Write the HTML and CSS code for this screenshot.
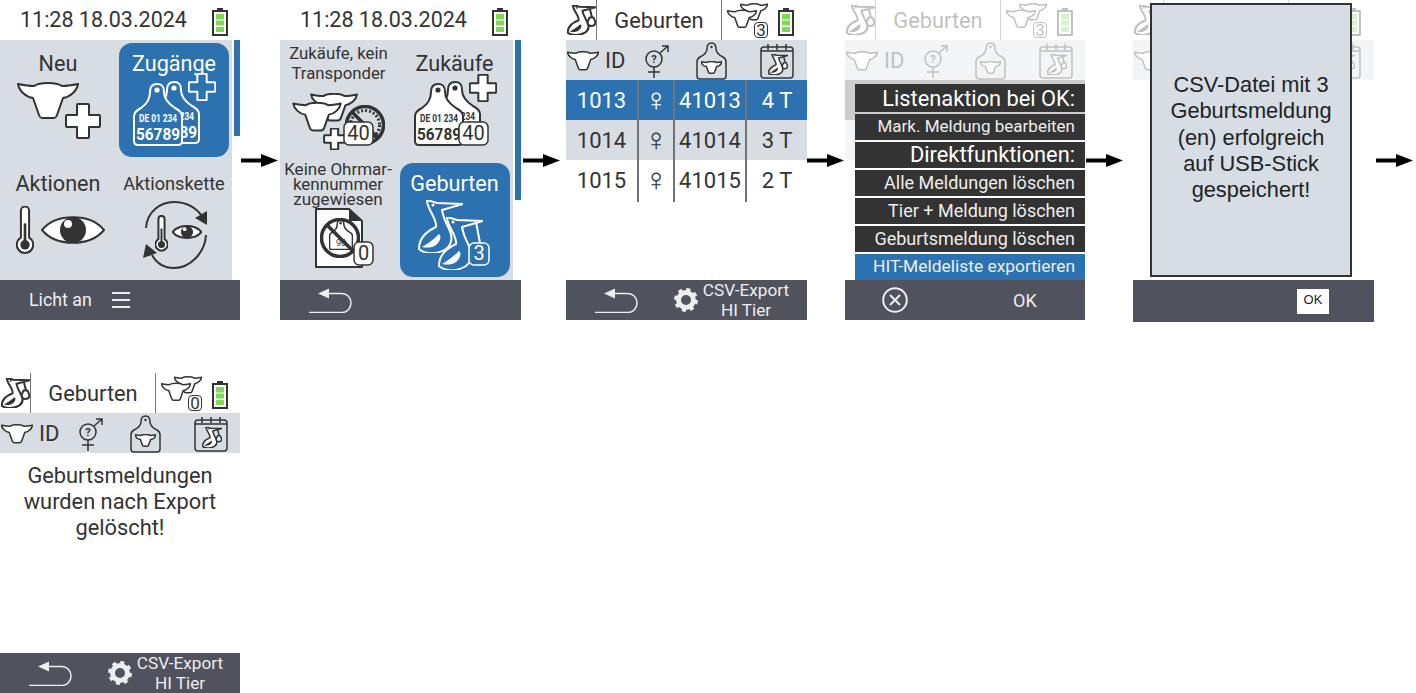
FILE: index.html
```html
<!DOCTYPE html>
<html lang="de">
<head>
<meta charset="utf-8">
<title>Geburten HIT-Export</title>
<link rel="stylesheet" href="styles.css">
</head>
<body>
<svg class="defs" aria-hidden="true">
  <symbol id="cow" viewBox="0 0 62 38">
    <path class="ln" d="M1 2C6 3 12 4 17 4C20 2 24 1 31 1C38 1 42 2 45 4C50 4 56 3 61 2C60 9 53 15 46 16L40 33C39 36 38 36 36 36H26C24 36 23 36 22 33L16 16C9 15 2 9 1 2Z"/>
  </symbol>
  <symbol id="plus" viewBox="0 0 36 36">
    <path class="ln" d="M12 2Q12 1 13 1H23Q24 1 24 2V12H34Q35 12 35 13V23Q35 24 34 24H24V34Q24 35 23 35H13Q12 35 12 34V24H2Q1 24 1 23V13Q1 12 2 12H12Z"/>
  </symbol>
  <symbol id="tagshape" viewBox="0 0 50 63">
    <path class="ln" d="M17 9C17 3 20 1 24 1C29 1 31 3 31 9C31 16 36 21 42 25C46 27 49 29 49 33V58Q49 62 45 62H5Q1 62 1 58V33C1 29 4 27 8 25C14 21 17 16 17 9Z"/>
    <circle class="ink" cx="24" cy="7" r="2.600"/>
  </symbol>
  <symbol id="eartag" viewBox="0 0 50 63">
    <use href="#tagshape" width="50" height="63"/>
    <text class="tag-small" x="25" y="39" text-anchor="middle" textLength="38" lengthAdjust="spacingAndGlyphs">DE 01 234</text>
    <text class="tag-big" x="25" y="57" text-anchor="middle" textLength="44" lengthAdjust="spacingAndGlyphs">56789</text>
  </symbol>
  <symbol id="stork" viewBox="0 0 45 53">
    <path class="ln" d="M9 0C13 1 16 2 19 3L45 4L24 10C25 17 28 23 31 29C35 37 34 44 28 49C20 54 8 55 1 49C1 40 7 32 18 27C19 22 14 14 12 10C10 6 9 3 9 0Z"/>
    <path class="ink" d="M4 47C9 44 15 40 21 34C24 36 22 42 18 45C14 48 9 48 4 47Z"/>
    <circle class="ink" cx="15" cy="5" r="1.500"/>
  </symbol>
  <symbol id="stork-b" viewBox="0 0 45 53" preserveAspectRatio="none">
    <path class="ln-open" d="M35 5L39 23"/>
    <use href="#stork" width="45" height="53"/>
    <path class="ln" d="M35 22H41L44 30C44 35 41 37 38 37C35 37 32 35 32 30Z"/>
  </symbol>
  <symbol id="therm" viewBox="0 0 17 47">
    <path class="ln" d="M4.500 4.500a4 4 0 0 1 8 0V31a8 8 0 1 1-8 0Z"/>
    <rect class="ink" x="7.200" y="17" width="2.600" height="20"/>
    <circle class="ink" cx="8.500" cy="38" r="4.600"/>
  </symbol>
  <symbol id="eye" viewBox="0 0 64 34">
    <path class="ln" d="M1 17C15 0 49 0 63 17C49 34 15 34 1 17Z"/>
    <circle class="ink" cx="32" cy="17" r="13"/>
    <circle class="hi" cx="27" cy="11" r="4"/>
  </symbol>
  <symbol id="gender" viewBox="0 0 24 33">
    <circle class="ln-open" cx="9" cy="14" r="8"/>
    <path class="ln-open" d="M15 8L23 1M17 1H23V7M9 22V33M3 27H15"/>
    <text class="q" x="9" y="18" text-anchor="middle">?</text>
  </symbol>
  <symbol id="cowtag" viewBox="0 0 31 38">
    <path class="ln-open" d="M11 7C11 3 13 1 15.500 1C18 1 20 3 20 7C20 10 23 13 27 15C29 16 30 18 30 20V34Q30 37 27 37H4Q1 37 1 34V20C1 18 2 16 4 15C8 13 11 10 11 7Z"/>
    <circle class="ink" cx="15.500" cy="5" r="1.200"/>
    <use href="#cow" x="5" y="19" width="21" height="13"/>
  </symbol>
  <symbol id="calendar" viewBox="0 0 34 36">
    <rect class="ln-open" x="1" y="4" width="32" height="31" rx="3"/>
    <path class="ln-open" d="M1 8H33M8 1V7M17 1V7M26 1V7"/>
    <use href="#stork-b" x="8" y="11" width="20" height="21"/>
  </symbol>
  <symbol id="nosign" viewBox="0 0 40 40">
    <circle class="ln-open" cx="20" cy="20" r="18.500"/>
    <path class="ln-open" d="M7 7L33 33"/>
  </symbol>
  <symbol id="battery" viewBox="0 0 16 28">
    <rect class="ink" x="5" y="0" width="6" height="2"/>
    <rect class="bat" x="1" y="3" width="14" height="24"/>
    <rect class="cell" x="4" y="6" width="8" height="5.500"/>
    <rect class="cell" x="4" y="12.500" width="8" height="5"/>
    <rect class="cell" x="4" y="19" width="8" height="5"/>
  </symbol>
  <symbol id="back" viewBox="0 -2 43 25">
    <polygon class="ink" points="9,3.500 20,-1.500 20,8.500"/>
    <path class="ln-open" d="M19 3.500H33a9 9.500 0 0 1 0 19H0"/>
  </symbol>
  <symbol id="gear" viewBox="0 0 24 24">
    <circle class="gear-ring" cx="12" cy="12" r="7.500"/>
    <circle class="gear-teeth" cx="12" cy="12" r="10"/>
  </symbol>
  <symbol id="cows" viewBox="0 0 41 35">
    <use href="#cow" x="13" y="0" width="28" height="18"/>
    <use href="#cow" x="0" y="6" width="30" height="20"/>
  </symbol>
</svg>

<div class="row">
  <section class="screen">
    <header class="clockbar"><span class="clock">11:28 18.03.2024</span><svg class="battery"><use href="#battery"/></svg></header>
    <div class="menu-body">
      <div class="tiles">
        <div class="tile"><div class="lbl lbl-lg">Neu</div>
          <svg class="art" viewBox="0 80 116 80"><use href="#cow" x="17" y="82" width="62" height="38"/><use href="#plus" x="65" y="103" width="36" height="36"/></svg></div>
        <div class="tile sel"><div class="lbl lbl-lg">Zugänge</div>
          <svg class="art" viewBox="116 80 116 80"><use href="#eartag" x="150" y="81" width="50" height="63"/><use href="#eartag" x="133" y="83" width="50" height="63"/><use href="#plus" x="188" y="73" width="28" height="28"/></svg></div>
        <div class="tile"><div class="lbl lbl-lg">Aktionen</div>
          <svg class="art" viewBox="0 200 116 80"><use href="#therm" x="16" y="206" width="18" height="48"/><use href="#eye" x="41" y="213" width="64" height="34"/></svg></div>
        <div class="tile"><div class="lbl lbl-md">Aktionskette</div>
          <svg class="art" viewBox="116 200 116 80">
            <path class="ln-open" d="M146 228C147 212 160 202 174 202C186 202 196 208 202 216"/>
            <path class="ln-open" d="M206 235C205 253 190 268 174 268C165 268 157 264 152 255"/>
            <polygon class="ink" points="207,211 207,225 195,218"/><polygon class="ink" points="146,244 143,258 157,253"/>
            <use href="#therm" x="155" y="215" width="13" height="37"/><use href="#eye" x="172" y="222" width="30" height="20"/>
          </svg></div>
      </div>
      <div class="scroll scroll-a"></div>
    </div>
    <footer class="foot"><span class="licht">Licht an</span><svg class="burger" viewBox="0 0 18 16"><path class="ln-open" d="M0 1H18M0 8H18M0 15H18"/></svg></footer>
  </section>
  <div class="arrow-cell arr1"><svg class="arrow"><path d="M0 4.500H20V0L37 6.500L20 13V8.500H0Z"/></svg></div>

  <section class="screen wide">
    <header class="clockbar"><span class="clock">11:28 18.03.2024</span><svg class="battery"><use href="#battery"/></svg></header>
    <div class="menu-body">
      <div class="tiles">
        <div class="tile"><div class="lbl lbl-two">Zukäufe, kein<br>Transponder</div>
          <svg class="art" viewBox="280 80 116 80">
            <use href="#cow" x="310" y="93" width="48" height="29"/><use href="#cow" x="292" y="102" width="50" height="30"/>
            <circle class="tread" cx="365" cy="125" r="14.500"/><use href="#nosign" class="thick" x="345" y="105" width="40" height="40"/><use href="#plus" x="323" y="128" width="23" height="22"/>
            <rect class="badge" x="344" y="122" width="29" height="23" rx="5"/><text class="badge-t" x="358.500" y="140" text-anchor="middle">40</text>
          </svg></div>
        <div class="tile"><div class="lbl lbl-lg">Zukäufe</div>
          <svg class="art" viewBox="396 80 116 80">
            <use href="#eartag" x="431" y="81" width="50" height="63"/><use href="#eartag" x="414" y="83" width="50" height="63"/><use href="#plus" x="469" y="74" width="28" height="28"/>
            <rect class="badge" x="459" y="122" width="29" height="23" rx="5"/><text class="badge-t" x="473.500" y="140" text-anchor="middle">40</text>
          </svg></div>
        <div class="tile"><div class="lbl lbl-three">Keine Ohrmar-<br>kennummer<br>zugewiesen</div>
          <svg class="art" viewBox="280 200 116 80">
            <path class="ln" d="M316 209H349L362 221V267H316Z"/><path class="ink" d="M349 209L362 221H349Z"/>
            <use href="#tagshape" class="thin" x="329" y="220" width="24" height="30"/><text class="tag-mini" x="341" y="246" text-anchor="middle">90</text><use href="#nosign" class="thick" x="320" y="218" width="40" height="40"/>
            <rect class="badge" x="354" y="242" width="19" height="23" rx="5"/><text class="badge-t" x="363.500" y="260" text-anchor="middle">0</text>
          </svg></div>
        <div class="tile sel"><div class="lbl lbl-lg">Geburten</div>
          <svg class="art" viewBox="396 200 116 80">
            <use href="#stork" x="418" y="200" width="45" height="53"/>
            <use href="#stork" x="438" y="217" width="45" height="53"/><path class="ln-open" d="M476 222L480 243"/>
            <rect class="badge" x="469" y="243" width="20" height="22" rx="5"/><text class="badge-t" x="479" y="260" text-anchor="middle">3</text>
          </svg></div>
      </div>
      <div class="scroll scroll-b"></div>
    </div>
    <footer class="foot"><svg class="back"><use href="#back"/></svg></footer>
  </section>
  <div class="arrow-cell arr2"><svg class="arrow"><path d="M0 4.500H20V0L37 6.500L20 13V8.500H0Z"/></svg></div>

  <section class="screen wide">
    <header class="titlebar"><div class="tb-stork"><svg class="hd-stork"><use href="#stork-b"/></svg></div><div class="tb-title">Geburten</div><div class="tb-status"><div class="cow-count"><svg class="hd-cows"><use href="#cows"/></svg><span class="count">3</span></div><svg class="battery"><use href="#battery"/></svg></div></header>
    <div class="cols colhead"><div class="c-id"><svg class="ic-cow"><use href="#cow"/></svg><span>ID</span></div><div class="c-ic"><svg class="ic-gender"><use href="#gender"/></svg></div><div class="c-ic"><svg class="ic-tag"><use href="#cowtag"/></svg></div><div class="c-ic"><svg class="ic-cal"><use href="#calendar"/></svg></div></div>
    <div class="table">
      <div class="cols tr tr-sel"><div class="td">1013</div><div class="td sym">♀</div><div class="td">41013</div><div class="td last">4 T</div></div>
      <div class="cols tr tr-alt"><div class="td">1014</div><div class="td sym">♀</div><div class="td">41014</div><div class="td last">3 T</div></div>
      <div class="cols tr"><div class="td">1015</div><div class="td sym">♀</div><div class="td">41015</div><div class="td last">2 T</div></div>
    </div>
    <footer class="foot foot-export"><svg class="back"><use href="#back"/></svg><svg class="gear"><use href="#gear"/></svg><div class="export">CSV-Export<br>HI Tier</div></footer>
  </section>
  <div class="arrow-cell arr3"><svg class="arrow"><path d="M0 4.500H20V0L37 6.500L20 13V8.500H0Z"/></svg></div>

  <section class="screen">
    <div class="dim">
      <header class="titlebar"><div class="tb-stork"><svg class="hd-stork"><use href="#stork-b"/></svg></div><div class="tb-title">Geburten</div><div class="tb-status"><div class="cow-count"><svg class="hd-cows"><use href="#cows"/></svg><span class="count">3</span></div><svg class="battery"><use href="#battery"/></svg></div></header>
      <div class="cols colhead"><div class="c-id"><svg class="ic-cow"><use href="#cow"/></svg><span>ID</span></div><div class="c-ic"><svg class="ic-gender"><use href="#gender"/></svg></div><div class="c-ic"><svg class="ic-tag"><use href="#cowtag"/></svg></div><div class="c-ic"><svg class="ic-cal"><use href="#calendar"/></svg></div></div>
    </div>
    <div class="table table-dim"><div class="dimrow dimrow-a"></div><div class="dimrow dimrow-b"></div></div>
    <div class="popup">
      <div class="pm pm-head">Listenaktion bei OK:</div>
      <div class="pm pm-narrow">Mark. Meldung bearbeiten</div>
      <div class="pm pm-sub">Direktfunktionen:</div>
      <div class="pm">Alle Meldungen löschen</div>
      <div class="pm">Tier + Meldung löschen</div>
      <div class="pm">Geburtsmeldung löschen</div>
      <div class="pm pm-sel">HIT-Meldeliste exportieren</div>
    </div>
    <footer class="foot foot-ok"><svg class="cancel" viewBox="0 0 26 26"><circle class="ln-open" cx="13" cy="13" r="11.800"/><path class="ln-open" d="M8 8L18 18M18 8L8 18"/></svg><span class="ok">OK</span></footer>
  </section>
  <div class="arrow-cell arr4"><svg class="arrow"><path d="M0 4.500H20V0L37 6.500L20 13V8.500H0Z"/></svg></div>

  <section class="screen wide tall">
    <div class="dim">
      <header class="titlebar"><div class="tb-stork"><svg class="hd-stork"><use href="#stork-b"/></svg></div><div class="tb-title">Geburten</div><div class="tb-status"><div class="cow-count"><svg class="hd-cows"><use href="#cows"/></svg><span class="count">3</span></div><svg class="battery"><use href="#battery"/></svg></div></header>
      <div class="cols colhead"><div class="c-id"><svg class="ic-cow"><use href="#cow"/></svg><span>ID</span></div><div class="c-ic"><svg class="ic-gender"><use href="#gender"/></svg></div><div class="c-ic"><svg class="ic-tag"><use href="#cowtag"/></svg></div><div class="c-ic"><svg class="ic-cal"><use href="#calendar"/></svg></div></div>
    </div>
    <div class="table"></div>
    <div class="dialog">CSV-Datei mit 3<br>Geburtsmeldung<br>(en) erfolgreich<br>auf USB-Stick<br>gespeichert!</div>
    <footer class="foot foot-dlg"><span class="okbtn">OK</span></footer>
  </section>
  <div class="arrow-cell arr5"><svg class="arrow"><path d="M0 4.500H20V0L37 6.500L20 13V8.500H0Z"/></svg></div>
</div>

<div class="row row-2">
  <section class="screen">
    <header class="titlebar"><div class="tb-stork"><svg class="hd-stork"><use href="#stork-b"/></svg></div><div class="tb-title">Geburten</div><div class="tb-status"><div class="cow-count"><svg class="hd-cows"><use href="#cows"/></svg><span class="count">0</span></div><svg class="battery"><use href="#battery"/></svg></div></header>
    <div class="cols colhead"><div class="c-id"><svg class="ic-cow"><use href="#cow"/></svg><span>ID</span></div><div class="c-ic"><svg class="ic-gender"><use href="#gender"/></svg></div><div class="c-ic"><svg class="ic-tag"><use href="#cowtag"/></svg></div><div class="c-ic"><svg class="ic-cal"><use href="#calendar"/></svg></div></div>
    <div class="table msg">Geburtsmeldungen<br>wurden nach Export<br>gelöscht!</div>
    <footer class="foot foot-export"><svg class="back"><use href="#back"/></svg><svg class="gear"><use href="#gear"/></svg><div class="export">CSV-Export<br>HI Tier</div></footer>
  </section>
</div>
</body>
</html>
```
FILE: styles.css
```css
:root {
  --ink: #333333;
  --panel: #d8dde3;
  --blue: #2c72b0;
  --foot: #50525e;
}
* { box-sizing: border-box; }
html, body { margin: 0; background: #fff; overflow: hidden; }
body {
  width: 1416px; height: 693px;
  font-family: Roboto, "Liberation Sans", sans-serif;
  color: var(--ink);
  --paper: #fff;
}
.defs { width: 0; height: 0; position: absolute; }
svg { display: block; overflow: visible; color: var(--ink); stroke-width: 2; }

/* symbol parts */
.ln { fill: var(--paper); stroke: currentColor; stroke-linejoin: round; vector-effect: non-scaling-stroke; }
.ln-open { fill: none; stroke: currentColor; vector-effect: non-scaling-stroke; }
.ink { fill: currentColor; }
.hi { fill: #fff; }
.tag-small { font: 700 10px Roboto, sans-serif; fill: currentColor; }
.tag-big { font: 700 17px Roboto, sans-serif; fill: currentColor; }
.tag-mini { font: 400 9px Roboto, sans-serif; fill: currentColor; }
.q { font: 700 11px Roboto, sans-serif; fill: currentColor; }
.bat { fill: #fff; stroke: currentColor; stroke-width: 2; }
.cell { fill: #7ed957; }
.gear-ring { fill: none; stroke: currentColor; stroke-width: 5; }
.gear-teeth { fill: none; stroke: currentColor; stroke-width: 4; stroke-dasharray: 3.850 4; }
.badge { fill: var(--paper); stroke: currentColor; stroke-width: 1.500; }
.badge-t { font: 400 20px Roboto, sans-serif; fill: currentColor; }
.thick { stroke-width: 3.500; }
.thin { stroke-width: 1.500; }
.tread { fill: none; stroke: var(--ink); stroke-width: 3; stroke-dasharray: 2 2; }

/* canvas flow */
.row { display: flex; align-items: flex-start; }
.row-2 { margin-top: 51px; }
.screen { position: relative; width: 240px; height: 320px; display: flex; flex-direction: column; flex: none; }
.screen.wide { width: 241px; }
.screen.tall { height: 322px; }
.arrow-cell { height: 320px; display: flex; align-items: center; flex: none; }
.arrow { width: 37px; height: 13px; fill: #000; }
.arr1 { width: 40px; padding-left: 1px; }
.arr2 { width: 45px; padding-left: 2px; }
.arr3 { width: 38px; padding-left: 0; }
.arr4 { width: 48px; padding-left: 1px; }
.arr5 { width: 42px; padding-left: 2px; }

/* header with clock */
.clockbar { height: 40px; flex: none; display: flex; align-items: center; padding-left: 20px; }
.clock { font-size: 21.500px; line-height: 42px; width: 192px; white-space: nowrap; }
.battery { width: 16px; height: 28px; flex: none; margin-top: 4px; }

/* tile menu */
.menu-body { flex: 1; display: flex; justify-content: space-between; }
.tiles { width: 232px; background: var(--panel); display: grid; grid-template-columns: 116px 116px; grid-template-rows: 120px 120px; }
.wide .tiles { width: 233px; grid-template-columns: 116px 117px; }
.scroll { width: 6px; background: var(--blue); }
.scroll-a { height: 96px; }
.scroll-b { height: 160px; }
.tile { position: relative; --paper: var(--panel); }
.tile.sel { --paper: var(--blue); color: #fff; }
.tile.sel::before { content: ""; position: absolute; inset: 3px; border-radius: 13px; background: var(--blue); }
.wide .tile.sel::before { left: 4px; }
.tile.sel svg { color: #fff; }
.lbl { position: relative; height: 40px; text-align: center; white-space: nowrap; }
.lbl-lg { font-size: 21.600px; line-height: 47px; }
.lbl-md { font-size: 18.200px; line-height: 47px; }
.lbl-two { font-size: 16.800px; line-height: 20px; padding-top: 3px; padding-left: 1px; }
.lbl-three { font-size: 17px; line-height: 15px; padding-top: 2px; }
.art { position: relative; width: 116px; height: 80px; stroke-width: 2; }
.tile:not(.sel) .art use[href="#plus"], .tile:not(.sel) .art use[href="#cow"],
.tile:not(.sel) .art use[href="#eartag"], .tile:not(.sel) .art use[href="#tagshape"],
.tile:not(.sel) .art use[href="#eye"], .tile:not(.sel) .art use[href="#therm"],
.tile:not(.sel) .art path.ln, .tile:not(.sel) .art .badge { --paper: #fff; }

/* footer */
.foot { height: 40px; flex: none; background: var(--foot); color: #eee; display: flex; align-items: center; margin-top: auto; }
.foot svg { color: #eee; }
.licht { font-size: 17.800px; line-height: 42px; margin-left: 29px; }
.burger { width: 18px; height: 16px; margin-left: 20px; }
.back { width: 43px; height: 25px; margin-left: 29px; stroke-width: 1.500; }
.gear { width: 24px; height: 24px; margin-left: 36px; }
.export { font-size: 17.200px; line-height: 20px; text-align: center; width: 92px; margin-left: 2px; }
.cancel { width: 26px; height: 26px; margin-left: 37px; stroke-width: 2; }
.ok { font-size: 18px; margin-left: 105px; }
.foot-dlg { height: 42px; }
.okbtn { background: #fff; color: #222; width: 32px; height: 25px; margin-left: 164px; font: 13px/22px "Liberation Sans", sans-serif; text-align: center; }

/* title bar */
.titlebar { height: 40px; flex: none; display: flex; }
.tb-stork { width: 31px; border-right: 1px solid #777; padding: 5px 0 0 1px; }
.hd-stork { width: 29px; height: 30px; }
.tb-title { width: 125px; border-right: 1px solid #777; font-size: 21.800px; line-height: 42px; text-align: center; }
.tb-status { flex: 1; display: flex; align-items: center; }
.cow-count { position: relative; width: 41px; height: 35px; margin-left: 5px; margin-right: 10px; }
.hd-cows { width: 41px; height: 35px; stroke-width: 1.500; }
.count { position: absolute; right: 0; bottom: 0; width: 14px; height: 16px; background: #fff; border: 1px solid var(--ink); border-radius: 4px; font-size: 17px; line-height: 14px; text-align: center; }

/* table */
.cols { display: grid; grid-template-columns: 73px 36px 72px 60px; height: 40px; flex: none; }
.colhead { background: var(--panel); align-items: center; }
.c-id { display: flex; align-items: center; padding-left: 1px; font-size: 22px; line-height: 42px; gap: 6px; }
.c-ic { display: flex; justify-content: center; align-items: center; }
.ic-cow { width: 32px; height: 20px; --paper: #fff; stroke-width: 1.500; }
.ic-gender { width: 24px; height: 33px; stroke-width: 1.500; }
.ic-tag { width: 31px; height: 38px; stroke-width: 1.500; }
.ic-cal { width: 34px; height: 36px; stroke-width: 1.500; }
.table { height: 200px; flex: none; }
.tr-sel { background: var(--blue); color: #fff; }
.tr-alt { background: var(--panel); }
.td { font-size: 22px; line-height: 42px; text-align: center; border-right: 2px solid #6f7378; }
.td.last { border-right: 0; }
.td.sym { font-family: "DejaVu Sans", sans-serif; font-size: 33px; font-weight: 200; line-height: 40px; overflow: hidden; }

/* dimmed screens and overlays */
.dim { opacity: .3; }
.dimrow { height: 40px; }
.dimrow-a { background: #cccccc; }
.dimrow-b { background: #f3f5f7; }
.popup { position: absolute; left: 10px; right: 0; top: 84px; display: flex; flex-direction: column; gap: 2px; }
.pm { height: 26px; background: #333; color: #eee; font-size: 18px; line-height: 26px; text-align: right; padding-right: 10px; white-space: nowrap; }
.pm-narrow { font-size: 17px; line-height: 25px; }
.pm-head { height: 28px; font-size: 21.800px; line-height: 30px; color: #fff; }
.pm-sub { font-size: 21.800px; color: #fff; }
.pm-sel { background: var(--blue); font-size: 17.400px; line-height: 25px; }
.dialog { position: absolute; left: 17px; top: 3px; width: 202px; height: 274px; background: #d6dde5; border: 2px solid #333; padding-top: 67px; font: 21.800px/26.300px "Liberation Sans", sans-serif; color: #222; text-align: center; }
.msg { font-size: 21.800px; line-height: 26px; text-align: center; padding-top: 10px; }
```
